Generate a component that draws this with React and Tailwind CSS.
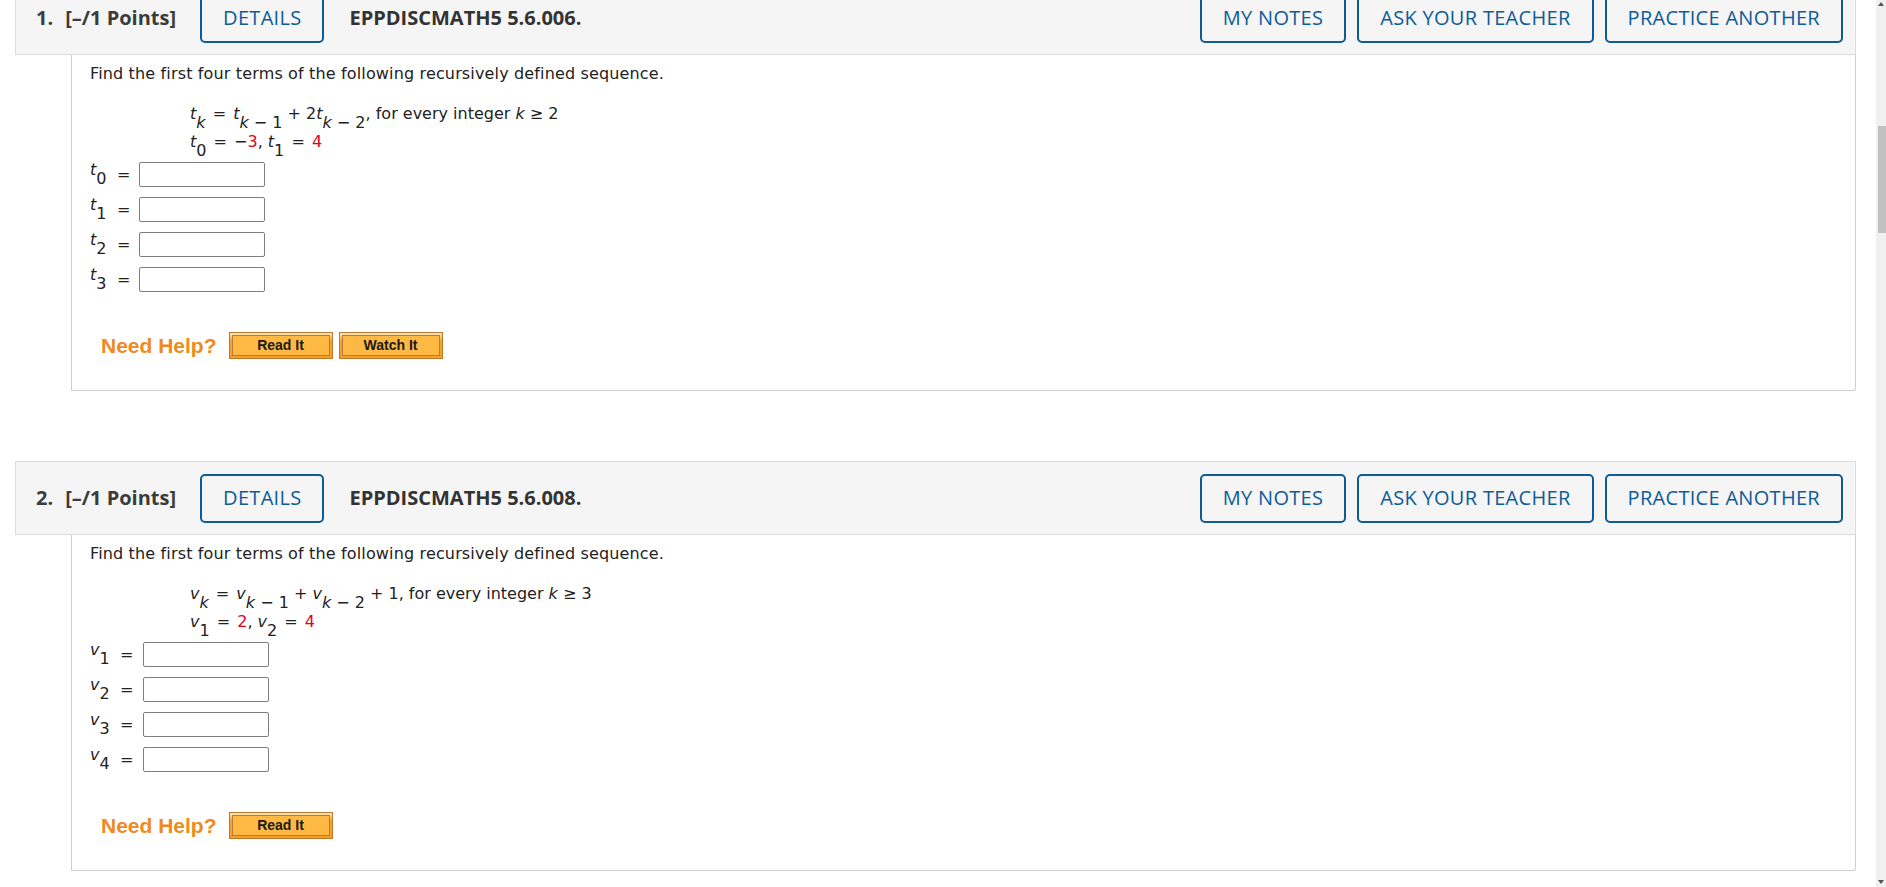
import React from 'react';

const BLUE = 'text-[#0d5c97] border-[#0d5c97]';

function OutlineButton({ children }) {
  return (
    <button className={`h-[49px] px-[21px] border-2 rounded-[5px] text-[20px] leading-none uppercase tracking-[0.3px] bg-transparent ${BLUE}`}>
      {children}
    </button>
  );
}

function Header({ num, code }) {
  return (
    <div className="h-[74px] border border-[#dcdcdc] bg-[#f5f5f5] flex items-center pl-[20px] pr-[12px] font-['Open_Sans',sans-serif]">
      <span className="text-[20px] font-bold text-[#3b3b3b]">{num}.</span>
      <span className="ml-[12px] text-[20px] font-bold text-[#3b3b3b]">[–/1 Points]</span>
      <div className="ml-[24px]">
        <OutlineButton>Details</OutlineButton>
      </div>
      <span className="ml-[25px] text-[20px] font-bold text-[#333]">{code}</span>
      <div className="ml-auto flex gap-[11px]">
        <OutlineButton>My Notes</OutlineButton>
        <OutlineButton>Ask Your Teacher</OutlineButton>
        <OutlineButton>Practice Another</OutlineButton>
      </div>
    </div>
  );
}

// italic variable
const V = ({ children }) => <i className="italic">{children}</i>;
// subscript, dropped below the baseline
const Sub = ({ children }) => <span className="text-[16px] leading-none align-[-9px]">{children}</span>;
const Red = ({ children }) => <span className="text-[#e3001b]">{children}</span>;
const Eq = () => <span className="mx-[2px]">=</span>;

function AnswerRow({ v, n, labelW, eqW }) {
  return (
    <div className="h-[35px] flex items-center">
      <span className={`${labelW} leading-none`}>
        <V>{v}</V>
        <Sub>{n}</Sub>
      </span>
      <span className={`${eqW} leading-none`}>=</span>
      <input className="w-[126px] h-[25px] border border-[#7d7d7d] rounded-[2px] bg-white outline-none" />
    </div>
  );
}

function HelpButton({ children }) {
  return (
    <div className="w-[104px] h-[27px] border border-[#bf772a] bg-linear-to-b from-[#fde9c8] via-[#f7a334] via-30% to-[#f69d2c] p-[2px] flex">
      <div className="flex-1 border border-[#b97b35] bg-[#fdb944] flex items-center justify-center font-['Liberation_Sans',Arial,sans-serif] font-bold text-[14px] text-[#1a1a1a]">
        {children}
      </div>
    </div>
  );
}

function Question({ num, code, line1, line2, rows, watch }) {
  return (
    <div>
      <Header num={num} code={code} />
      <div className="ml-[56px] border-x border-b border-[#cfcfcf] rounded-br-[3px] bg-white pt-[8px] pb-[31px] pl-[18px] font-['DejaVu_Sans',Verdana,sans-serif] text-[16px] text-[#222]">
        <p className="leading-[22px] tracking-[0.15px]">Find the first four terms of the following recursively defined sequence.</p>
        <div className="ml-[100px] mt-[15px]">
          <div className="h-[28px] leading-[28px] whitespace-nowrap">{line1}</div>
          <div className="h-[28px] leading-[28px] whitespace-nowrap">{line2}</div>
        </div>
        <div className="mt-[1px]">
          {rows.map((r) => (
            <AnswerRow key={r.n} {...r} />
          ))}
        </div>
        <div className="mt-[35px] ml-[11px] flex items-center gap-[12px]">
          <span className="font-['Liberation_Sans',Arial,sans-serif] font-bold text-[21px] leading-[27px] text-[#f08a1d]">Need Help?</span>
          <div className="flex gap-[6px]">
            <HelpButton>Read It</HelpButton>
            {watch && <HelpButton>Watch It</HelpButton>}
          </div>
        </div>
      </div>
    </div>
  );
}

export default function App() {
  const q1Line1 = (
    <>
      <V>t</V><Sub><V>k</V></Sub> <Eq /> <V>t</V><Sub><V>k</V> − 1</Sub> + 2<V>t</V><Sub><V>k</V> − 2</Sub>, for every integer <V>k</V> ≥ 2
    </>
  );
  const q1Line2 = (
    <>
      <V>t</V><Sub>0</Sub> <Eq /> −<Red>3</Red>, <V>t</V><Sub>1</Sub> <Eq /> <Red>4</Red>
    </>
  );
  const q2Line1 = (
    <>
      <V>v</V><Sub><V>k</V></Sub> <Eq /> <V>v</V><Sub><V>k</V> − 1</Sub> + <V>v</V><Sub><V>k</V> − 2</Sub> + 1, for every integer <V>k</V> ≥ 3
    </>
  );
  const q2Line2 = (
    <>
      <V>v</V><Sub>1</Sub> <Eq /> <Red>2</Red>, <V>v</V><Sub>2</Sub> <Eq /> <Red>4</Red>
    </>
  );

  const tRows = [0, 1, 2, 3].map((n) => ({ v: 't', n, labelW: 'w-[27px]', eqW: 'w-[22px]' }));
  const vRows = [1, 2, 3, 4].map((n) => ({ v: 'v', n, labelW: 'w-[30px]', eqW: 'w-[23px]' }));

  return (
    <div className="w-full h-[887px] overflow-hidden flex bg-white">
      <div className="flex-1 pl-[15px] pr-[20px] mt-[-19px]">
        <Question num={1} code="EPPDISCMATH5 5.6.006." line1={q1Line1} line2={q1Line2} rows={tRows} watch />
        <div className="mt-[70px]">
          <Question num={2} code="EPPDISCMATH5 5.6.008." line1={q2Line1} line2={q2Line2} rows={vRows} />
        </div>
      </div>
      {/* fake scrollbar */}
      <div className="w-[10px] h-full bg-[#f0f0f0] flex flex-col items-center">
        <div className="mt-[2px] w-0 h-0 border-x-[3px] border-x-transparent border-b-[4px] border-b-[#555]" />
        <div className="mt-[120px] w-[8px] ml-[2px] h-[107px] bg-[#c1c1c1]" />
        <div className="mt-auto mb-[3px] w-0 h-0 border-x-[3px] border-x-transparent border-t-[4px] border-t-[#555]" />
      </div>
    </div>
  );
}
